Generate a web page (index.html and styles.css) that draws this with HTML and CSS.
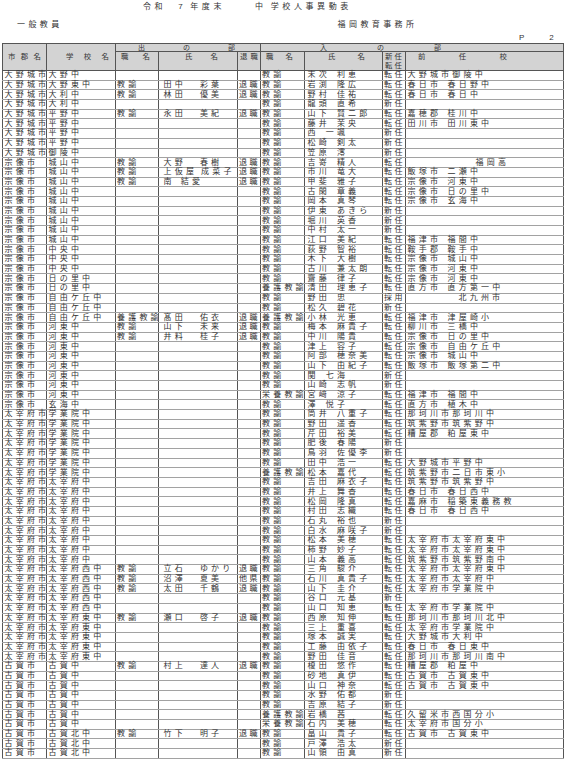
FILE: index.html
```html
<!DOCTYPE html>
<html lang="ja">
<head>
<meta charset="utf-8">
<title>令和7年度末 中学校人事異動表</title>
<link rel="stylesheet" href="styles.css">
</head>
<body>
<div class="page">
  <div class="title"><span class="t-a">令和</span><span class="t-b">7</span><span class="t-c">年度末</span><span class="t-d">中</span><span class="t-e">学校人事異動表</span></div>
  <div class="subhead"><span class="cat">一般教員</span><span class="office">福岡教育事務所</span></div>
  <div class="pageno"><span class="p">P</span><span class="n">2</span></div>
  <table class="grid">
    <colgroup>
      <col class="w-city"><col class="w-school"><col class="w-pos"><col class="w-name"><col class="w-ret"><col class="w-pos2"><col class="w-name2"><col class="w-new"><col class="w-prev">
    </colgroup>
    <thead>
      <tr class="h1">
        <th rowspan="2"><div class="lab l-city"><span>市</span><span>郡</span><span>名</span></div></th>
        <th rowspan="2"><div class="lab l-school"><span>学</span><span>校</span><span>名</span></div></th>
        <th colspan="3"><div class="lab l-out"><span>出</span><span>の</span><span>部</span></div></th>
        <th colspan="4"><div class="lab l-in"><span>入</span><span>の</span><span>部</span></div></th>
      </tr>
      <tr class="h2">
        <th><div class="lab l-pos"><span>職</span><span>名</span></div></th>
        <th><div class="lab l-name"><span>氏</span><span>名</span></div></th>
        <th><div class="lab l-ret"><span>退</span><span>職</span></div></th>
        <th><div class="lab l-pos2"><span>職</span><span>名</span></div></th>
        <th><div class="lab l-name2"><span>氏</span><span>名</span></div></th>
        <th><div class="stack"><span>新任</span><span>転任</span></div></th>
        <th><div class="lab l-prev"><span>前</span><span>任</span><span>校</span></div></th>
      </tr>
    </thead>
    <tbody>
      <tr><td>大野城市</td><td>大野中</td><td></td><td></td><td></td><td>教諭</td><td><span class="sn">末次</span>利恵</td><td>転任</td><td><span class="ct">大野城市</span>御陵中</td></tr>
      <tr><td>大野城市</td><td>大野東中</td><td>教諭</td><td><span class="sn">田中</span>彩葉</td><td>退職</td><td>教諭</td><td><span class="sn">岩渕</span>隆広</td><td>転任</td><td><span class="ct">春日市</span>春日野中</td></tr>
      <tr><td>大野城市</td><td>大利中</td><td>教諭</td><td><span class="sn">林田</span>優美</td><td>退職</td><td>教諭</td><td><span class="sn">野村</span>佳祐</td><td>転任</td><td><span class="ct">春日市</span>春日中</td></tr>
      <tr><td>大野城市</td><td>大利中</td><td></td><td></td><td></td><td>教諭</td><td><span class="sn">龍頭</span>直希</td><td>新任</td><td></td></tr>
      <tr><td>大野城市</td><td>平野中</td><td>教諭</td><td><span class="sn">永田</span>美紀</td><td>退職</td><td>教諭</td><td><span class="sn">山下</span>賢二郎</td><td>転任</td><td><span class="ct">嘉穂郡</span>桂川中</td></tr>
      <tr><td>大野城市</td><td>平野中</td><td></td><td></td><td></td><td>教諭</td><td><span class="sn">藤井</span>茉央</td><td>転任</td><td><span class="ct">田川市</span>田川東中</td></tr>
      <tr><td>大野城市</td><td>平野中</td><td></td><td></td><td></td><td>教諭</td><td><span class="sn">西</span>一颯</td><td>新任</td><td></td></tr>
      <tr><td>大野城市</td><td>平野中</td><td></td><td></td><td></td><td>教諭</td><td><span class="sn">松崎</span>剣太</td><td>新任</td><td></td></tr>
      <tr><td>大野城市</td><td>御陵中</td><td></td><td></td><td></td><td>教諭</td><td><span class="sn">笠原</span>澪</td><td>新任</td><td></td></tr>
      <tr><td>宗像市</td><td>城山中</td><td>教諭</td><td><span class="sn">大野</span>春樹</td><td>退職</td><td>教諭</td><td><span class="sn">吉嵜</span>精人</td><td>転任</td><td><span class="hs">福岡高</span></td></tr>
      <tr><td>宗像市</td><td>城山中</td><td>教諭</td><td><span class="sn three">上仮屋</span>成菜子</td><td>退職</td><td>教諭</td><td><span class="sn">市川</span>竜大</td><td>転任</td><td><span class="ct">飯塚市</span>二瀬中</td></tr>
      <tr><td>宗像市</td><td>城山中</td><td>教諭</td><td><span class="sn one">南</span>結愛</td><td>退職</td><td>教諭</td><td><span class="sn">甲斐</span>雅子</td><td>転任</td><td><span class="ct">宗像市</span>河東中</td></tr>
      <tr><td>宗像市</td><td>城山中</td><td></td><td></td><td></td><td>教諭</td><td><span class="sn">古閑</span>章義</td><td>転任</td><td><span class="ct">宗像市</span>日の里中</td></tr>
      <tr><td>宗像市</td><td>城山中</td><td></td><td></td><td></td><td>教諭</td><td><span class="sn">岡本</span>真琴</td><td>転任</td><td><span class="ct">宗像市</span>玄海中</td></tr>
      <tr><td>宗像市</td><td>城山中</td><td></td><td></td><td></td><td>教諭</td><td><span class="sn">伊東</span>あきら</td><td>新任</td><td></td></tr>
      <tr><td>宗像市</td><td>城山中</td><td></td><td></td><td></td><td>教諭</td><td><span class="sn">堀川</span>英香</td><td>新任</td><td></td></tr>
      <tr><td>宗像市</td><td>城山中</td><td></td><td></td><td></td><td>教諭</td><td><span class="sn">中村</span>太一</td><td>新任</td><td></td></tr>
      <tr><td>宗像市</td><td>城山中</td><td></td><td></td><td></td><td>教諭</td><td><span class="sn">江口</span>美紀</td><td>転任</td><td><span class="ct">福津市</span>福間中</td></tr>
      <tr><td>宗像市</td><td>中央中</td><td></td><td></td><td></td><td>教諭</td><td><span class="sn">荻野</span>智裕</td><td>転任</td><td><span class="ct">鞍手郡</span>鞍手中</td></tr>
      <tr><td>宗像市</td><td>中央中</td><td></td><td></td><td></td><td>教諭</td><td><span class="sn">木下</span>大樹</td><td>転任</td><td><span class="ct">宗像市</span>城山中</td></tr>
      <tr><td>宗像市</td><td>中央中</td><td></td><td></td><td></td><td>教諭</td><td><span class="sn">古川</span>兼太朗</td><td>転任</td><td><span class="ct">宗像市</span>河東中</td></tr>
      <tr><td>宗像市</td><td>日の里中</td><td></td><td></td><td></td><td>教諭</td><td><span class="sn">齋藤</span>律子</td><td>転任</td><td><span class="ct">宗像市</span>河東中</td></tr>
      <tr><td>宗像市</td><td>日の里中</td><td></td><td></td><td></td><td>養護教諭</td><td><span class="sn">清田</span>理恵子</td><td>転任</td><td><span class="ct">直方市</span>直方第一中</td></tr>
      <tr><td>宗像市</td><td>自由ケ丘中</td><td></td><td></td><td></td><td>教諭</td><td><span class="sn">野田</span>忠</td><td>採用</td><td><span class="kc">北九州市</span></td></tr>
      <tr><td>宗像市</td><td>自由ケ丘中</td><td></td><td></td><td></td><td>教諭</td><td><span class="sn">松久</span>碧花</td><td>新任</td><td></td></tr>
      <tr><td>宗像市</td><td>自由ケ丘中</td><td>養護教諭</td><td><span class="sn">髙田</span>佑衣</td><td>退職</td><td>養護教諭</td><td><span class="sn">小林</span>光恵</td><td>転任</td><td><span class="ct">福津市</span>津屋崎小</td></tr>
      <tr><td>宗像市</td><td>河東中</td><td>教諭</td><td><span class="sn">山下</span>未来</td><td>退職</td><td>教諭</td><td><span class="sn">梅本</span>麻貴子</td><td>転任</td><td><span class="ct">柳川市</span>三橋中</td></tr>
      <tr><td>宗像市</td><td>河東中</td><td>教諭</td><td><span class="sn">井料</span>桂子</td><td>退職</td><td>教諭</td><td><span class="sn">中川</span>陽貴</td><td>転任</td><td><span class="ct">宗像市</span>日の里中</td></tr>
      <tr><td>宗像市</td><td>河東中</td><td></td><td></td><td></td><td>教諭</td><td><span class="sn">津上</span>容子</td><td>転任</td><td><span class="ct">宗像市</span>自由ケ丘中</td></tr>
      <tr><td>宗像市</td><td>河東中</td><td></td><td></td><td></td><td>教諭</td><td><span class="sn">阿部</span>穂奈美</td><td>転任</td><td><span class="ct">宗像市</span>城山中</td></tr>
      <tr><td>宗像市</td><td>河東中</td><td></td><td></td><td></td><td>教諭</td><td><span class="sn">山下</span>由紀子</td><td>転任</td><td><span class="ct">飯塚市</span>飯塚第二中</td></tr>
      <tr><td>宗像市</td><td>河東中</td><td></td><td></td><td></td><td>教諭</td><td><span class="sn">関</span>七海</td><td>新任</td><td></td></tr>
      <tr><td>宗像市</td><td>河東中</td><td></td><td></td><td></td><td>教諭</td><td><span class="sn">山崎</span>志帆</td><td>新任</td><td></td></tr>
      <tr><td>宗像市</td><td>河東中</td><td></td><td></td><td></td><td>栄養教諭</td><td><span class="sn">宮﨑</span>涼子</td><td>転任</td><td><span class="ct">福津市</span>福間中</td></tr>
      <tr><td>宗像市</td><td>玄海中</td><td></td><td></td><td></td><td>教諭</td><td><span class="sn">澤</span>悦子</td><td>転任</td><td><span class="ct">直方市</span>植木中</td></tr>
      <tr><td>太宰府市</td><td>学業院中</td><td></td><td></td><td></td><td>教諭</td><td><span class="sn">筒井</span>八重子</td><td>転任</td><td><span class="ct">那珂川市</span>那珂川中</td></tr>
      <tr><td>太宰府市</td><td>学業院中</td><td></td><td></td><td></td><td>教諭</td><td><span class="sn">野田</span>遥香</td><td>転任</td><td><span class="ct">筑紫野市</span>筑紫野中</td></tr>
      <tr><td>太宰府市</td><td>学業院中</td><td></td><td></td><td></td><td>教諭</td><td><span class="sn">芹田</span>裕美</td><td>転任</td><td><span class="ct">糟屋郡</span>粕屋東中</td></tr>
      <tr><td>太宰府市</td><td>学業院中</td><td></td><td></td><td></td><td>教諭</td><td><span class="sn">肥後</span>春陽</td><td>新任</td><td></td></tr>
      <tr><td>太宰府市</td><td>学業院中</td><td></td><td></td><td></td><td>教諭</td><td><span class="sn">鳥羽</span>佐優李</td><td>新任</td><td></td></tr>
      <tr><td>太宰府市</td><td>学業院中</td><td></td><td></td><td></td><td>教諭</td><td><span class="sn">田中</span>浩一</td><td>転任</td><td><span class="ct">大野城市</span>平野中</td></tr>
      <tr><td>太宰府市</td><td>学業院中</td><td></td><td></td><td></td><td>養護教諭</td><td><span class="sn">松本</span>嘉代</td><td>転任</td><td><span class="ct">筑紫野市</span>二日市東小</td></tr>
      <tr><td>太宰府市</td><td>太宰府中</td><td></td><td></td><td></td><td>教諭</td><td><span class="sn">吉田</span>麻衣子</td><td>転任</td><td><span class="ct">筑紫野市</span>筑紫野中</td></tr>
      <tr><td>太宰府市</td><td>太宰府中</td><td></td><td></td><td></td><td>教諭</td><td><span class="sn">井上</span>舞香</td><td>転任</td><td><span class="ct">春日市</span>春日西中</td></tr>
      <tr><td>太宰府市</td><td>太宰府中</td><td></td><td></td><td></td><td>教諭</td><td><span class="sn">松岡</span>隆真</td><td>転任</td><td><span class="ct">嘉麻市</span>稲築東義務教</td></tr>
      <tr><td>太宰府市</td><td>太宰府中</td><td></td><td></td><td></td><td>教諭</td><td><span class="sn">村田</span>志織</td><td>転任</td><td><span class="ct">春日市</span>春日西中</td></tr>
      <tr><td>太宰府市</td><td>太宰府中</td><td></td><td></td><td></td><td>教諭</td><td><span class="sn">石丸</span>裕也</td><td>新任</td><td></td></tr>
      <tr><td>太宰府市</td><td>太宰府中</td><td></td><td></td><td></td><td>教諭</td><td><span class="sn">白水</span>麻咲子</td><td>新任</td><td></td></tr>
      <tr><td>太宰府市</td><td>太宰府中</td><td></td><td></td><td></td><td>教諭</td><td><span class="sn">松本</span>美穂</td><td>転任</td><td><span class="ct">太宰府市</span>太宰府東中</td></tr>
      <tr><td>太宰府市</td><td>太宰府中</td><td></td><td></td><td></td><td>教諭</td><td><span class="sn">柿野</span>妙子</td><td>転任</td><td><span class="ct">太宰府市</span>太宰府東中</td></tr>
      <tr><td>太宰府市</td><td>太宰府中</td><td></td><td></td><td></td><td>教諭</td><td><span class="sn">山本</span>義高</td><td>転任</td><td><span class="ct">筑紫野市</span>筑紫野南中</td></tr>
      <tr><td>太宰府市</td><td>太宰府西中</td><td>教諭</td><td><span class="sn">立石</span>ゆかり</td><td>退職</td><td>教諭</td><td><span class="sn">三角</span>駿介</td><td>転任</td><td><span class="ct">太宰府市</span>太宰府東中</td></tr>
      <tr><td>太宰府市</td><td>太宰府西中</td><td>教諭</td><td><span class="sn">沼澤</span>夏美</td><td>他県</td><td>教諭</td><td><span class="sn">石川</span>真貴子</td><td>転任</td><td><span class="ct">太宰府市</span>太宰府中</td></tr>
      <tr><td>太宰府市</td><td>太宰府西中</td><td>教諭</td><td><span class="sn">太田</span>千鶴</td><td>退職</td><td>教諭</td><td><span class="sn">山下</span>圭介</td><td>転任</td><td><span class="ct">太宰府市</span>学業院中</td></tr>
      <tr><td>太宰府市</td><td>太宰府西中</td><td></td><td></td><td></td><td>教諭</td><td><span class="sn">谷口</span>元基</td><td>新任</td><td></td></tr>
      <tr><td>太宰府市</td><td>太宰府西中</td><td></td><td></td><td></td><td>教諭</td><td><span class="sn">山口</span>知恵</td><td>転任</td><td><span class="ct">太宰府市</span>学業院中</td></tr>
      <tr><td>太宰府市</td><td>太宰府東中</td><td>教諭</td><td><span class="sn">瀬口</span>啓子</td><td>退職</td><td>教諭</td><td><span class="sn">西原</span>知伸</td><td>転任</td><td><span class="ct">那珂川市</span>那珂川北中</td></tr>
      <tr><td>太宰府市</td><td>太宰府東中</td><td></td><td></td><td></td><td>教諭</td><td><span class="sn">三上</span>重喜</td><td>転任</td><td><span class="ct">太宰府市</span>学業院中</td></tr>
      <tr><td>太宰府市</td><td>太宰府東中</td><td></td><td></td><td></td><td>教諭</td><td><span class="sn">塚本</span>誠実</td><td>転任</td><td><span class="ct">大野城市</span>大利中</td></tr>
      <tr><td>太宰府市</td><td>太宰府東中</td><td></td><td></td><td></td><td>教諭</td><td><span class="sn">工藤</span>由依子</td><td>転任</td><td><span class="ct">春日市</span>春日東中</td></tr>
      <tr><td>太宰府市</td><td>太宰府東中</td><td></td><td></td><td></td><td>教諭</td><td><span class="sn">野田</span>佳音</td><td>転任</td><td><span class="ct">那珂川市</span>那珂川南中</td></tr>
      <tr><td>古賀市</td><td>古賀中</td><td>教諭</td><td><span class="sn">村上</span>達人</td><td>退職</td><td>教諭</td><td><span class="sn">榎田</span>悠作</td><td>転任</td><td><span class="ct">糟屋郡</span>粕屋中</td></tr>
      <tr><td>古賀市</td><td>古賀中</td><td></td><td></td><td></td><td>教諭</td><td><span class="sn">砂地</span>真伊</td><td>転任</td><td><span class="ct">古賀市</span>古賀東中</td></tr>
      <tr><td>古賀市</td><td>古賀中</td><td></td><td></td><td></td><td>教諭</td><td><span class="sn">山口</span>神奈</td><td>転任</td><td><span class="ct">古賀市</span>古賀東中</td></tr>
      <tr><td>古賀市</td><td>古賀中</td><td></td><td></td><td></td><td>教諭</td><td><span class="sn">水野</span>佑都</td><td>新任</td><td></td></tr>
      <tr><td>古賀市</td><td>古賀中</td><td></td><td></td><td></td><td>教諭</td><td><span class="sn">吉原</span>結子</td><td>新任</td><td></td></tr>
      <tr><td>古賀市</td><td>古賀中</td><td></td><td></td><td></td><td>養護教諭</td><td><span class="sn">岩橋</span>茜</td><td>転任</td><td><span class="ct">久留米市</span>西国分小</td></tr>
      <tr><td>古賀市</td><td>古賀中</td><td></td><td></td><td></td><td>栄養教諭</td><td><span class="sn">石内</span>美穂</td><td>転任</td><td><span class="ct">太宰府市</span>国分小</td></tr>
      <tr><td>古賀市</td><td>古賀北中</td><td>教諭</td><td><span class="sn">竹下</span>明子</td><td>退職</td><td>教諭</td><td><span class="sn">畠山</span>貴子</td><td>転任</td><td><span class="ct">古賀市</span>古賀東中</td></tr>
      <tr><td>古賀市</td><td>古賀北中</td><td></td><td></td><td></td><td>教諭</td><td><span class="sn">戸澤</span>浩太</td><td>新任</td><td></td></tr>
      <tr><td>古賀市</td><td>古賀北中</td><td></td><td></td><td></td><td>教諭</td><td><span class="sn">山領</span>由真</td><td>新任</td><td></td></tr>
    </tbody>
  </table>
</div>
</body>
</html>
```
FILE: styles.css
```css
* { box-sizing: border-box; }
html, body { margin: 0; padding: 0; background: #fff; }
body {
  width: 566px;
  height: 762px;
  overflow: hidden;
  font-family: "Liberation Sans", "Noto Sans CJK JP", sans-serif;
  color: #333;
}
.page { padding-left: 2px; }

/* ---- heading lines ---- */
.title {
  height: 13px;
  display: flex;
  align-items: center;
  font-size: 8px;
  line-height: 9px;
  letter-spacing: 3.6px;
  white-space: nowrap;
}
.t-a { margin-left: 141px; }
.t-b { margin-left: 12px; }
.t-c { margin-left: 4px; }
.t-d { margin-left: 30px; }
.t-e { margin-left: 4px; }

.subhead {
  margin-top: 5px;
  height: 13px;
  display: flex;
  align-items: center;
  font-size: 8px;
  line-height: 9px;
  letter-spacing: 3.4px;
  white-space: nowrap;
}
.cat { margin-left: 15px; }
.office { margin-left: 275px; }

.pageno {
  height: 12px;
  display: flex;
  align-items: center;
  font-size: 8px;
  line-height: 9px;
}
.pageno .p { margin-left: 517px; }
.pageno .n { margin-left: 25px; }

/* ---- table ---- */
.grid {
  border-collapse: collapse;
  table-layout: fixed;
  width: 561px;
  border: 1px solid #444;
}
.w-city { width: 44px; }
.w-school { width: 69px; }
.w-pos { width: 43px; }
.w-name { width: 79px; }
.w-ret { width: 23px; }
.w-pos2 { width: 44px; }
.w-name2 { width: 78px; }
.w-new { width: 23px; }
.w-prev { width: 158px; }

thead th {
  padding: 0;
  font-weight: normal;
  font-size: 7.4px;
  line-height: 8px;
  border: 1px solid #555;
  background: #fff repeating-conic-gradient(#b9b9b9 0 25%, #ececec 0 50%) 0 0 / 2px 2px;
  white-space: nowrap;
}
.h1 th { height: 7px; vertical-align: middle; }
.h1 th .lab { height: 7px; align-items: center; font-size: 7px; }
.h2 th { height: 18px; vertical-align: top; padding-top: 1px; }
.h1 th[rowspan] { vertical-align: middle; }
.h1 th[rowspan] .lab { height: 9px; font-size: 7.4px; }

.lab { display: flex; justify-content: space-between; }
.l-city { padding: 0 5px 0 5px; }
.l-school { padding: 0 6px 0 19px; }
.l-out { padding: 0 25px 0 22px; }
.l-in { padding: 0 122px 0 59px; }
.l-pos { padding: 0 8px 0 5px; }
.l-name { padding: 0 19px 0 26px; }
.l-ret { padding: 0 2px 0 2px; }
.l-pos2 { padding: 0 11px 0 5px; }
.l-name2 { padding: 0 17px 0 23px; }
.l-prev { padding: 0 56px 0 12px; }
.stack {
  display: flex;
  flex-direction: column;
  padding-left: 1px;
  letter-spacing: 2.2px;
  line-height: 8.5px;
}

tbody tr { height: 9.7px; }
tbody td {
  height: 9.7px;
  padding: 0 0 0 1.5px;
  font-size: 8px;
  line-height: 8px;
  letter-spacing: 3.2px;
  white-space: nowrap;
  vertical-align: middle;
  border-left: 1px solid #555;
  border-right: 1px solid #555;
  border-bottom: 1px solid #a2a2a2;
}
tbody td:nth-child(3),
tbody td:nth-child(6) { padding-left: 1px; }
tbody td:nth-child(4) { padding-left: 4.5px; }
tbody td:nth-child(5),
tbody td:nth-child(8) { padding-left: 1px; letter-spacing: 2.4px; }
tbody td:nth-child(7) { padding-left: 2.5px; }

.sn { display: inline-block; }
tbody td:nth-child(4) .sn { margin-right: 14px; }
tbody td:nth-child(4) .sn.one { margin-right: 6px; }
tbody td:nth-child(4) .sn.three { margin-right: 4px; }
tbody td:nth-child(7) .sn { margin-right: 7px; }

.ct { display: inline-block; min-width: 40px; }
.hs { margin-left: 68px; }
.kc { margin-left: 51px; }
```
